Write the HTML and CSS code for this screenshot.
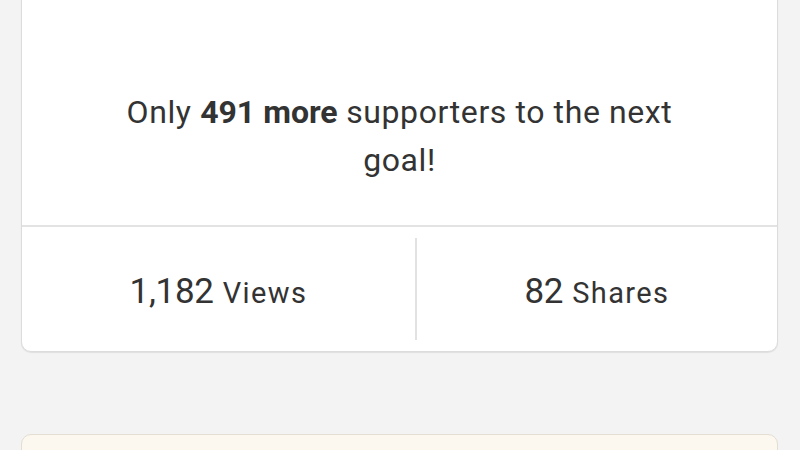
FILE: index.html
```html
<!DOCTYPE html>
<html lang="en">
<head>
<meta charset="utf-8">
<title>Campaign stats</title>
<link rel="stylesheet" href="styles.css">
</head>
<body>
<main class="page">
  <section class="card">
    <div class="goal">
      <p class="goal-text">Only <strong>491 more</strong> supporters to the next goal!</p>
    </div>
    <div class="stats">
      <div class="stat"><span class="stat-num">1,182</span><span class="stat-label">Views</span></div>
      <div class="stat-divider"></div>
      <div class="stat"><span class="stat-num">82</span><span class="stat-label">Shares</span></div>
    </div>
  </section>
  <section class="note"></section>
</main>
</body>
</html>
```
FILE: styles.css
```css
html, body {
  margin: 0;
  padding: 0;
  background: #f3f3f3;
}
body {
  font-family: Roboto, "Liberation Sans", sans-serif;
  color: #333333;
  overflow: hidden;
  height: 450px;
}
.page {
  padding: 0 22px 0 21px;
}
.card {
  margin-top: -12px;
  background: #ffffff;
  border: 1px solid #dcdcdc;
  border-radius: 10px;
  box-shadow: 0 1px 1px rgba(0,0,0,0.08);
}
.goal {
  padding: 99px 30px 41px;
  border-bottom: 2px solid #e3e3e3;
  text-align: center;
}
.goal-text {
  margin: 0 auto;
  max-width: 580px;
  font-size: 32px;
  letter-spacing: 0.6px;
  line-height: 48px;
  font-weight: 400;
}
.goal-text strong {
  font-weight: 700;
  letter-spacing: 0;
}
.stats {
  display: flex;
  height: 124px;
  padding: 11px 0;
  box-sizing: border-box;
}
.stat {
  flex: 1 1 auto;
  display: flex;
  align-items: center;
  justify-content: center;
  gap: 9px;
  padding-top: 4px;
}
.stat-num {
  font-size: 35px;
  letter-spacing: -0.3px;
}
.stat-label {
  font-size: 29px;
  letter-spacing: 1.4px;
  padding-top: 3px;
}
.stat-divider {
  width: 2px;
  background: #e2e2e2;
}
.note {
  margin-top: 82px;
  height: 60px;
  background: #fcf8f0;
  border: 1px solid #e3ddd2;
  border-radius: 10px;
}
```
